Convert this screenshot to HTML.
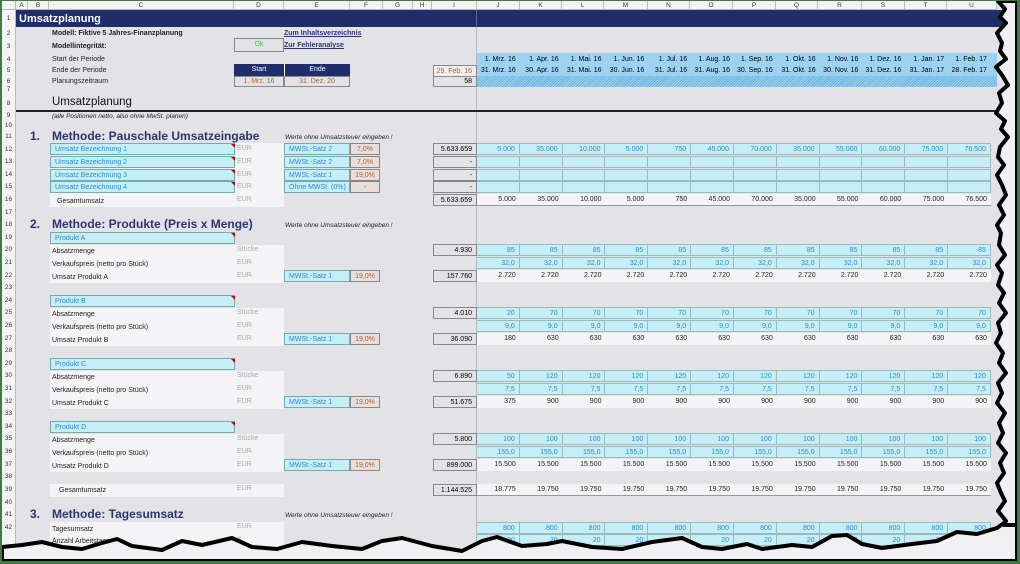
<!DOCTYPE html>
<html><head><meta charset="utf-8"><style>
*{margin:0;padding:0;box-sizing:border-box}
body{width:1020px;height:564px;overflow:hidden;background:#f2f2f2;font-family:"Liberation Sans",sans-serif;position:relative}
#sh{position:absolute;left:2px;top:1px;width:1015px;height:560px;background:#e3e3e7;overflow:hidden}
.a{position:absolute;font-size:7px;line-height:12px;white-space:nowrap;color:#222}
.rh{position:absolute;left:0;width:14px;background:#f4f4f4;top:0;height:560px;border-right:1px solid #bbb}
.rn{position:absolute;left:0;width:13px;text-align:center;font-size:6.5px;color:#333}
.ch{position:absolute;top:0;height:9px;background:#f4f4f4;border-right:1px solid #bbb;border-bottom:1px solid #bbb;font-size:6.5px;text-align:center;line-height:9px;color:#333}
.m{position:absolute;left:475px;width:514px;height:12px;display:flex}
.m span{flex:1;text-align:right;padding-right:4px;font-size:7px;line-height:12px;border-right:1px solid #9bb}
.cy{background:#c5eef7;border-top:1px solid #9bb;border-bottom:1px solid #9bb}
.cy span{color:#2d8ccf}
.wh{background:#f4f4f6;border-bottom:1px solid #999}
.wh span{border-right:none;color:#222}
.box{position:absolute;border:1px solid #888;font-size:7px;line-height:11px;text-align:right;padding-right:4px;height:12px}
.in{position:absolute;background:#c5eef7;border:1px solid #7aa;color:#2d8ccf;font-size:7px;line-height:11px;padding-left:4px;height:12px}
.pc{position:absolute;background:#e8dfdc;border:1px solid #888;color:#b5612a;font-size:7px;line-height:11px;text-align:center;height:12px}
.lb{position:absolute;background:#f4f4f6}
.u{position:absolute;color:#aaa;font-size:7px;line-height:12px}
.h{position:absolute;font-size:12px;font-weight:bold;color:#2b3570}
.tri{position:absolute;width:0;height:0;border-top:4px solid #c00;border-left:4px solid transparent}
</style></head><body>
<div id="sh">
<div class="rh"></div>
<div class="ch" style="left:0;width:14px"></div>
<div class="ch" style="left:14px;width:12px">A</div>
<div class="ch" style="left:26px;width:21px">B</div>
<div class="ch" style="left:47px;width:185px">C</div>
<div class="ch" style="left:232px;width:50px">D</div>
<div class="ch" style="left:282px;width:66px">E</div>
<div class="ch" style="left:348px;width:33px">F</div>
<div class="ch" style="left:381px;width:30px">G</div>
<div class="ch" style="left:411px;width:19px">H</div>
<div class="ch" style="left:430px;width:45px">I</div>
<div class="ch" style="left:475px;width:43px">J</div><div class="ch" style="left:518px;width:42px">K</div><div class="ch" style="left:560px;width:42px">L</div><div class="ch" style="left:602px;width:44px">M</div><div class="ch" style="left:646px;width:42px">N</div><div class="ch" style="left:688px;width:43px">O</div><div class="ch" style="left:731px;width:43px">P</div><div class="ch" style="left:774px;width:42px">Q</div><div class="ch" style="left:816px;width:44px">R</div><div class="ch" style="left:860px;width:43px">S</div><div class="ch" style="left:903px;width:42px">T</div><div class="ch" style="left:945px;width:50px">U</div>

<!-- row1 -->
<div style="position:absolute;left:14px;top:9px;width:990px;height:17px;background:#1f2d6b"></div>
<div style="position:absolute;left:474px;top:9px;width:1px;height:17px;background:#5a6a9a"></div>
<div class="a" style="left:17px;top:10px;font-size:11px;line-height:16px;font-weight:bold;color:#fff">Umsatzplanung</div>
<div style="position:absolute;left:474px;top:26px;width:1px;height:540px;background:#b8b8c0"></div>

<div class="rn" style="top:14px">1</div><div class="rn" style="top:29px">2</div><div class="rn" style="top:42px">3</div><div class="rn" style="top:55px">4</div><div class="rn" style="top:66px">5</div><div class="rn" style="top:77px">6</div><div class="rn" style="top:85px">7</div><div class="rn" style="top:99px">8</div><div class="rn" style="top:111px">9</div><div class="rn" style="top:121px">10</div>

<div class="a" style="left:50px;top:27px;font-weight:bold">Modell: Fiktive 5 Jahres-Finanzplanung</div>
<div class="a" style="left:50px;top:40px;font-weight:bold">Modellintegrität:</div>
<div class="a" style="left:282px;top:27px;font-weight:bold;color:#2b3570;text-decoration:underline">Zum Inhaltsverzeichnis</div>
<div class="a" style="left:282px;top:39px;font-weight:bold;color:#2b3570;text-decoration:underline">Zur Fehleranalyse</div>
<div class="box" style="left:232px;top:37px;width:50px;height:14px;text-align:center;padding:0;color:#3c3;line-height:12px">Ok</div>
<div class="a" style="left:50px;top:53px">Start der Periode</div>
<div class="a" style="left:50px;top:64px">Ende der Periode</div>
<div class="a" style="left:50px;top:75px">Planungszeitraum</div>
<div style="position:absolute;left:232px;top:63px;width:116px;height:12px;background:#1f2d6b"></div>
<div class="a" style="left:232px;top:63px;width:50px;text-align:center;color:#fff">Start</div>
<div class="a" style="left:282px;top:63px;width:66px;text-align:center;color:#fff;border-left:1px solid #fff">Ende</div>
<div class="box" style="left:232px;top:75px;width:50px;height:11px;line-height:10px;text-align:center;padding:0;color:#b5612a">1. Mrz. 16</div>
<div class="box" style="left:282px;top:75px;width:66px;height:11px;line-height:10px;text-align:center;padding:0;color:#b5612a">31. Dez. 20</div>
<div class="box" style="left:431px;top:64px;width:44px;color:#b5612a;background:#eee">29. Feb. 16</div>
<div class="box" style="left:431px;top:75px;width:44px;height:11px;line-height:10px">58</div>
<div style="position:absolute;left:475px;top:52px;width:520px;height:34px;background:#9dd3f2"></div>
<div style="position:absolute;left:475px;top:75px;width:520px;height:11px;background:repeating-linear-gradient(135deg,#9dd3f2 0 1px,#6fb1dc 1px 2px)"></div>
<div class="m" style="top:53px"><span style="border:none">1. Mrz. 16</span><span style="border:none">1. Apr. 16</span><span style="border:none">1. Mai. 16</span><span style="border:none">1. Jun. 16</span><span style="border:none">1. Jul. 16</span><span style="border:none">1. Aug. 16</span><span style="border:none">1. Sep. 16</span><span style="border:none">1. Okt. 16</span><span style="border:none">1. Nov. 16</span><span style="border:none">1. Dez. 16</span><span style="border:none">1. Jan. 17</span><span style="border:none">1. Feb. 17</span></div>
<div class="m" style="top:64px"><span style="border:none">31. Mrz. 16</span><span style="border:none">30. Apr. 16</span><span style="border:none">31. Mai. 16</span><span style="border:none">30. Jun. 16</span><span style="border:none">31. Jul. 16</span><span style="border:none">31. Aug. 16</span><span style="border:none">30. Sep. 16</span><span style="border:none">31. Okt. 16</span><span style="border:none">30. Nov. 16</span><span style="border:none">31. Dez. 16</span><span style="border:none">31. Jan. 17</span><span style="border:none">28. Feb. 17</span></div>

<div class="a" style="left:50px;top:94px;font-size:11.5px;line-height:14px;color:#111">Umsatzplanung</div>
<div style="position:absolute;left:14px;top:109px;width:990px;height:1.5px;background:#222"></div>
<div class="a" style="left:50px;top:111px;font-style:italic;font-size:6.5px;line-height:10px">(alle Positionen netto, also ohne MwSt. planen)</div>

<!-- row numbers 11-43 -->
<div class="rn" style="top:132px">11</div><div class="rn" style="top:145px">12</div><div class="rn" style="top:157px">13</div><div class="rn" style="top:170px">14</div><div class="rn" style="top:182px">15</div><div class="rn" style="top:195px">16</div><div class="rn" style="top:208px">17</div><div class="rn" style="top:220px">18</div><div class="rn" style="top:233px">19</div><div class="rn" style="top:245px">20</div><div class="rn" style="top:258px">21</div><div class="rn" style="top:271px">22</div><div class="rn" style="top:283px">23</div><div class="rn" style="top:296px">24</div><div class="rn" style="top:308px">25</div><div class="rn" style="top:321px">26</div><div class="rn" style="top:334px">27</div><div class="rn" style="top:346px">28</div><div class="rn" style="top:359px">29</div><div class="rn" style="top:371px">30</div><div class="rn" style="top:384px">31</div><div class="rn" style="top:397px">32</div><div class="rn" style="top:409px">33</div><div class="rn" style="top:422px">34</div><div class="rn" style="top:434px">35</div><div class="rn" style="top:447px">36</div><div class="rn" style="top:460px">37</div><div class="rn" style="top:472px">38</div><div class="rn" style="top:485px">39</div><div class="rn" style="top:498px">40</div><div class="rn" style="top:510px">41</div><div class="rn" style="top:523px">42</div>

<!-- Section 1 -->
<div class="h" style="left:28px;top:128px">1.</div><div class="h" style="left:50px;top:128px">Methode: Pauschale Umsatzeingabe</div>
<div class="a" style="left:283px;top:131px;font-style:italic;font-size:6.5px">Werte ohne Umsatzsteuer eingeben !</div>
<div class="lb" style="left:48px;top:142px;width:234px;height:64px"></div>
<div class="in" style="left:48px;top:142px;width:185px">Umsatz Bezeichnung 1</div>
<div class="in" style="left:48px;top:155px;width:185px">Umsatz Bezeichnung 2</div>
<div class="in" style="left:48px;top:168px;width:185px">Umsatz Bezeichnung 3</div>
<div class="in" style="left:48px;top:180px;width:185px">Umsatz Bezeichnung 4</div>
<div class="tri" style="left:229px;top:143px"></div><div class="tri" style="left:229px;top:156px"></div><div class="tri" style="left:229px;top:169px"></div><div class="tri" style="left:229px;top:181px"></div>
<div class="u" style="left:235px;top:142px">EUR</div><div class="u" style="left:235px;top:155px">EUR</div><div class="u" style="left:235px;top:168px">EUR</div><div class="u" style="left:235px;top:180px">EUR</div><div class="u" style="left:235px;top:193px">EUR</div>
<div class="a" style="left:55px;top:195px">Gesamtumsatz</div>
<div class="in" style="left:282px;top:142px;width:66px">MWSt.-Satz 2</div><div class="pc" style="left:348px;top:142px;width:30px">7,0%</div>
<div class="in" style="left:282px;top:155px;width:66px">MWSt.-Satz 2</div><div class="pc" style="left:348px;top:155px;width:30px">7,0%</div>
<div class="in" style="left:282px;top:168px;width:66px">MWSt.-Satz 1</div><div class="pc" style="left:348px;top:168px;width:30px">19,0%</div>
<div class="in" style="left:282px;top:180px;width:66px">Ohne MWSt. (0%)</div><div class="pc" style="left:348px;top:180px;width:30px">-</div>
<div class="box" style="left:431px;top:142px;width:44px">5.633.659</div>
<div class="box" style="left:431px;top:155px;width:44px">-</div>
<div class="box" style="left:431px;top:168px;width:44px">-</div>
<div class="box" style="left:431px;top:180px;width:44px">-</div>
<div class="box" style="left:431px;top:193px;width:44px">5.633.659</div>
<div class="m cy" style="top:142px"><span>5.000</span><span>35.000</span><span>10.000</span><span>5.000</span><span>750</span><span>45.000</span><span>70.000</span><span>35.000</span><span>55.000</span><span>60.000</span><span>75.000</span><span>76.500</span></div>
<div class="m cy" style="top:155px"><span></span><span></span><span></span><span></span><span></span><span></span><span></span><span></span><span></span><span></span><span></span><span></span></div>
<div class="m cy" style="top:168px"><span></span><span></span><span></span><span></span><span></span><span></span><span></span><span></span><span></span><span></span><span></span><span></span></div>
<div class="m cy" style="top:180px"><span></span><span></span><span></span><span></span><span></span><span></span><span></span><span></span><span></span><span></span><span></span><span></span></div>
<div class="m wh" style="top:193px"><span>5.000</span><span>35.000</span><span>10.000</span><span>5.000</span><span>750</span><span>45.000</span><span>70.000</span><span>35.000</span><span>55.000</span><span>60.000</span><span>75.000</span><span>76.500</span></div>

<!-- Section 2 -->
<div class="h" style="left:28px;top:216px">2.</div><div class="h" style="left:50px;top:216px">Methode: Produkte (Preis x Menge)</div>
<div class="a" style="left:283px;top:219px;font-style:italic;font-size:6.5px">Werte ohne Umsatzsteuer eingeben !</div>

<!-- Produkt A -->
<div class="in" style="left:48px;top:231px;width:185px">Produkt A</div><div class="tri" style="left:229px;top:232px"></div>
<div class="lb" style="left:48px;top:244px;width:234px;height:38px"></div>
<div class="a" style="left:50px;top:245px">Absatzmenge</div><div class="a" style="left:50px;top:258px">Verkaufspreis (netto pro Stück)</div><div class="a" style="left:50px;top:271px">Umsatz Produkt A</div>
<div class="u" style="left:235px;top:243px">Stücke</div><div class="u" style="left:235px;top:256px">EUR</div><div class="u" style="left:235px;top:269px">EUR</div>
<div class="in" style="left:282px;top:269px;width:66px">MWSt.-Satz 1</div><div class="pc" style="left:348px;top:269px;width:30px">19,0%</div>
<div class="box" style="left:431px;top:243px;width:44px">4.930</div><div class="box" style="left:431px;top:269px;width:44px">157.760</div>
<div class="m cy" style="top:243px"><span>85</span><span>85</span><span>85</span><span>85</span><span>85</span><span>85</span><span>85</span><span>85</span><span>85</span><span>85</span><span>85</span><span>85</span></div>
<div class="m cy" style="top:256px"><span>32,0</span><span>32,0</span><span>32,0</span><span>32,0</span><span>32,0</span><span>32,0</span><span>32,0</span><span>32,0</span><span>32,0</span><span>32,0</span><span>32,0</span><span>32,0</span></div>
<div class="m wh" style="top:269px;border:none"><span>2.720</span><span>2.720</span><span>2.720</span><span>2.720</span><span>2.720</span><span>2.720</span><span>2.720</span><span>2.720</span><span>2.720</span><span>2.720</span><span>2.720</span><span>2.720</span></div>

<!-- Produkt B -->
<div class="in" style="left:48px;top:294px;width:185px">Produkt B</div><div class="tri" style="left:229px;top:295px"></div>
<div class="lb" style="left:48px;top:307px;width:234px;height:38px"></div>
<div class="a" style="left:50px;top:308px">Absatzmenge</div><div class="a" style="left:50px;top:321px">Verkaufspreis (netto pro Stück)</div><div class="a" style="left:50px;top:334px">Umsatz Produkt B</div>
<div class="u" style="left:235px;top:306px">Stücke</div><div class="u" style="left:235px;top:319px">EUR</div><div class="u" style="left:235px;top:332px">EUR</div>
<div class="in" style="left:282px;top:332px;width:66px">MWSt.-Satz 1</div><div class="pc" style="left:348px;top:332px;width:30px">19,0%</div>
<div class="box" style="left:431px;top:306px;width:44px">4.010</div><div class="box" style="left:431px;top:332px;width:44px">36.090</div>
<div class="m cy" style="top:306px"><span>20</span><span>70</span><span>70</span><span>70</span><span>70</span><span>70</span><span>70</span><span>70</span><span>70</span><span>70</span><span>70</span><span>70</span></div>
<div class="m cy" style="top:319px"><span>9,0</span><span>9,0</span><span>9,0</span><span>9,0</span><span>9,0</span><span>9,0</span><span>9,0</span><span>9,0</span><span>9,0</span><span>9,0</span><span>9,0</span><span>9,0</span></div>
<div class="m wh" style="top:332px;border:none"><span>180</span><span>630</span><span>630</span><span>630</span><span>630</span><span>630</span><span>630</span><span>630</span><span>630</span><span>630</span><span>630</span><span>630</span></div>

<!-- Produkt C -->
<div class="in" style="left:48px;top:357px;width:185px">Produkt C</div><div class="tri" style="left:229px;top:358px"></div>
<div class="lb" style="left:48px;top:370px;width:234px;height:38px"></div>
<div class="a" style="left:50px;top:371px">Absatzmenge</div><div class="a" style="left:50px;top:384px">Verkaufspreis (netto pro Stück)</div><div class="a" style="left:50px;top:397px">Umsatz Produkt C</div>
<div class="u" style="left:235px;top:369px">Stücke</div><div class="u" style="left:235px;top:382px">EUR</div><div class="u" style="left:235px;top:395px">EUR</div>
<div class="in" style="left:282px;top:395px;width:66px">MWSt.-Satz 1</div><div class="pc" style="left:348px;top:395px;width:30px">19,0%</div>
<div class="box" style="left:431px;top:369px;width:44px">6.890</div><div class="box" style="left:431px;top:395px;width:44px">51.675</div>
<div class="m cy" style="top:369px"><span>50</span><span>120</span><span>120</span><span>120</span><span>120</span><span>120</span><span>120</span><span>120</span><span>120</span><span>120</span><span>120</span><span>120</span></div>
<div class="m cy" style="top:382px"><span>7,5</span><span>7,5</span><span>7,5</span><span>7,5</span><span>7,5</span><span>7,5</span><span>7,5</span><span>7,5</span><span>7,5</span><span>7,5</span><span>7,5</span><span>7,5</span></div>
<div class="m wh" style="top:395px;border:none"><span>375</span><span>900</span><span>900</span><span>900</span><span>900</span><span>900</span><span>900</span><span>900</span><span>900</span><span>900</span><span>900</span><span>900</span></div>

<!-- Produkt D -->
<div class="in" style="left:48px;top:420px;width:185px">Produkt D</div><div class="tri" style="left:229px;top:421px"></div>
<div class="lb" style="left:48px;top:433px;width:234px;height:38px"></div>
<div class="a" style="left:50px;top:434px">Absatzmenge</div><div class="a" style="left:50px;top:447px">Verkaufspreis (netto pro Stück)</div><div class="a" style="left:50px;top:460px">Umsatz Produkt D</div>
<div class="u" style="left:235px;top:432px">Stücke</div><div class="u" style="left:235px;top:445px">EUR</div><div class="u" style="left:235px;top:458px">EUR</div>
<div class="in" style="left:282px;top:458px;width:66px">MWSt.-Satz 1</div><div class="pc" style="left:348px;top:458px;width:30px">19,0%</div>
<div class="box" style="left:431px;top:432px;width:44px">5.800</div><div class="box" style="left:431px;top:458px;width:44px">899.000</div>
<div class="m cy" style="top:432px"><span>100</span><span>100</span><span>100</span><span>100</span><span>100</span><span>100</span><span>100</span><span>100</span><span>100</span><span>100</span><span>100</span><span>100</span></div>
<div class="m cy" style="top:445px"><span>155,0</span><span>155,0</span><span>155,0</span><span>155,0</span><span>155,0</span><span>155,0</span><span>155,0</span><span>155,0</span><span>155,0</span><span>155,0</span><span>155,0</span><span>155,0</span></div>
<div class="m wh" style="top:458px;border:none"><span>15.500</span><span>15.500</span><span>15.500</span><span>15.500</span><span>15.500</span><span>15.500</span><span>15.500</span><span>15.500</span><span>15.500</span><span>15.500</span><span>15.500</span><span>15.500</span></div>

<!-- Gesamt -->
<div class="lb" style="left:48px;top:483px;width:234px;height:13px"></div>
<div class="a" style="left:57px;top:484px">Gesamtumsatz</div><div class="u" style="left:235px;top:482px">EUR</div>
<div class="box" style="left:431px;top:483px;width:44px">1.144.525</div>
<div class="m wh" style="top:483px"><span>18.775</span><span>19.750</span><span>19.750</span><span>19.750</span><span>19.750</span><span>19.750</span><span>19.750</span><span>19.750</span><span>19.750</span><span>19.750</span><span>19.750</span><span>19.750</span></div>

<!-- Section 3 -->
<div class="h" style="left:28px;top:506px">3.</div><div class="h" style="left:50px;top:506px">Methode: Tagesumsatz</div>
<div class="a" style="left:283px;top:509px;font-style:italic;font-size:6.5px">Werte ohne Umsatzsteuer eingeben !</div>
<div class="lb" style="left:48px;top:521px;width:234px;height:30px"></div>
<div class="a" style="left:50px;top:523px">Tagesumsatz</div><div class="u" style="left:235px;top:520px">EUR</div>
<div class="a" style="left:50px;top:535px">Anzahl Arbeitstage</div><div class="u" style="left:235px;top:533px">#</div>
<div class="m cy" style="top:521px"><span>800</span><span>800</span><span>800</span><span>800</span><span>800</span><span>800</span><span>800</span><span>800</span><span>800</span><span>800</span><span>800</span><span>800</span></div>
<div class="m cy" style="top:533px"><span>20</span><span>20</span><span>20</span><span>20</span><span>20</span><span>20</span><span>20</span><span>20</span><span>20</span><span>20</span><span>20</span><span>20</span></div>

<!-- torn edges -->
<svg style="position:absolute;left:0;top:0" width="1015" height="560">
<path d="M0,560 L0,546 L20,544 L40,541 L60,546 L80,548 L100,542 L115,538 L130,545 L160,549 L180,540 L200,544 L230,537 L250,546 L275,548 L300,541 L330,545 L360,548 L380,540 L400,537 L430,545 L460,550 L480,540 L495,536 L520,545 L545,543 L560,540 L590,546 L620,548 L650,541 L680,537 L700,546 L720,548 L745,543 L760,548 L790,544 L810,546 L830,535 L845,534 L860,543 L880,547 L910,543 L935,540 L955,531 L975,533 L995,527 L1002,522 L1015,522 L1015,560 Z" fill="#f1f1f3" stroke="#000" stroke-width="4" stroke-linejoin="round"/>
<path d="M1015,0 L996,0 L1003,8 L998,16 L1004,22 L995,32 L1000,42 L998,50 L1004,58 L994,66 L1000,74 L1006,84 L997,92 L1000,102 L994,112 L1003,120 L999,128 L1006,136 L998,146 L996,156 L1002,164 L995,174 L1000,184 L1004,194 L997,204 L1002,214 L995,224 L999,232 L997,244 L1003,254 L995,264 L1000,272 L996,284 L1002,292 L997,302 L1004,312 L996,322 L999,332 L994,342 L1001,352 L997,362 L1004,372 L996,382 L1000,392 L995,402 L1003,412 L997,422 L1001,432 L996,442 L1004,452 L998,462 L1002,472 L995,482 L999,492 L1003,500 L996,510 L1004,520 L1002,524 L1015,524 Z" fill="#f1f1f3" stroke="#000" stroke-width="4" stroke-linejoin="round"/>
</svg>
</div>
<div style="position:absolute;left:0;top:0;width:1020px;height:564px;border:2px solid #3f7c45;border-top-width:1px;border-bottom-width:3px;border-right-width:3px;pointer-events:none"></div>
</body></html>
